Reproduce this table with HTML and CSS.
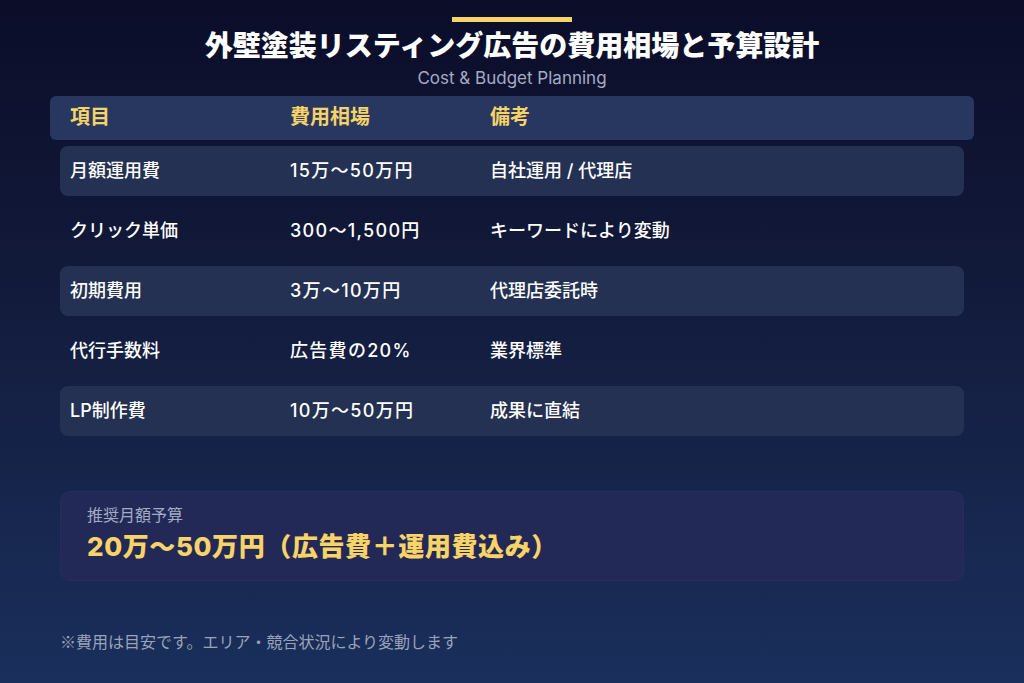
FILE: index.html
```html
<!DOCTYPE html>
<html lang="ja">
<head>
<meta charset="utf-8">
<link rel="stylesheet" href="styles.css">
</head>
<body>
<div class="page">
  <header class="head">
    <div class="accent"></div>
    <h1 class="title">外壁塗装リスティング広告の費用相場と予算設計</h1>
    <p class="subtitle">Cost &amp; Budget Planning</p>
  </header>
  <div class="table">
    <div class="thead">
      <span class="c1">項目</span><span class="c2">費用相場</span><span class="c3">備考</span>
    </div>
    <div class="row alt"><span class="c1">月額運用費</span><span class="c2">15万〜50万円</span><span class="c3">自社運用 / 代理店</span></div>
    <div class="row"><span class="c1">クリック単価</span><span class="c2">300〜1,500円</span><span class="c3">キーワードにより変動</span></div>
    <div class="row alt"><span class="c1">初期費用</span><span class="c2">3万〜10万円</span><span class="c3">代理店委託時</span></div>
    <div class="row"><span class="c1">代行手数料</span><span class="c2">広告費の20%</span><span class="c3">業界標準</span></div>
    <div class="row alt"><span class="c1">LP制作費</span><span class="c2">10万〜50万円</span><span class="c3">成果に直結</span></div>
  </div>
  <div class="reco">
    <div class="reco-label">推奨月額予算</div>
    <div class="reco-value">20万〜50万円（広告費＋運用費込み）</div>
  </div>
  <p class="note">※費用は目安です。エリア・競合状況により変動します</p>
</div>
</body>
</html>
```

FILE: styles.css
```css
html, body {
  margin: 0;
  padding: 0;
}
body {
  width: 1024px;
  height: 683px;
  overflow: hidden;
  background: linear-gradient(180deg, #0b0d29 0%, #121a3a 40%, #1a2f5c 100%);
  font-family: Inter, "Noto Sans CJK JP", "Noto Sans", sans-serif;
  color: #ffffff;
}
.page {
  display: flex;
  flex-direction: column;
  padding: 17px 50px 0 50px;
}
.head {
  display: flex;
  flex-direction: column;
  align-items: center;
}
.accent {
  width: 120px;
  height: 5px;
  background: #f7d368;
}
.title {
  margin: 2px 0 0 0;
  font-family: "Noto Sans CJK JP", sans-serif;
  font-size: 28px;
  line-height: 40px;
  font-weight: 900;
  color: #ffffff;
}
.subtitle {
  margin: 2px 0 0 0;
  font-family: Inter, Roboto, "Noto Sans", sans-serif;
  font-size: 17px;
  line-height: 24px;
  color: #a4abc4;
}
.table {
  margin-top: 6px;
  display: flex;
  flex-direction: column;
  gap: 10px;
}
.thead {
  display: flex;
  align-items: center;
  height: 44px;
  box-sizing: border-box;
  padding: 0 20px 6px 20px;
  background: #283760;
  border-radius: 6px;
  color: #f7d368;
  font-weight: 700;
  font-size: 20px;
}
.row {
  display: flex;
  align-items: center;
  height: 50px;
  margin: 0 10px;
  padding: 0 10px 4px 10px;
  box-sizing: border-box;
  border-radius: 8px;
  font-size: 18px;
  font-weight: 500;
}
.thead + .row {
  margin-top: -4px;
}
.row.alt {
  background: #243152;
}
.c1 { width: 220px; }
.c2 { width: 200px; }
.c3 { flex: 1; }
.row .c2 {
  letter-spacing: 1.3px;
}
.reco {
  margin: 55px 10px 0 10px;
  height: 90px;
  box-sizing: border-box;
  padding: 10px 26px;
  background: #222957;
  border: 1px solid #262e5e;
  border-radius: 10px;
}
.reco-label {
  font-family: "Noto Sans CJK JP", sans-serif;
  font-size: 16px;
  line-height: 24px;
  color: #a4abc4;
}
.reco-value {
  margin-top: 1px;
  font-size: 26px;
  line-height: 40px;
  font-weight: 800;
  letter-spacing: 0.6px;
  color: #f7d368;
}
.note {
  margin: 48px 10px 0 10px;
  font-family: "Noto Sans CJK JP", sans-serif;
  font-size: 16px;
  line-height: 24px;
  color: #9aa3ba;
}
```
